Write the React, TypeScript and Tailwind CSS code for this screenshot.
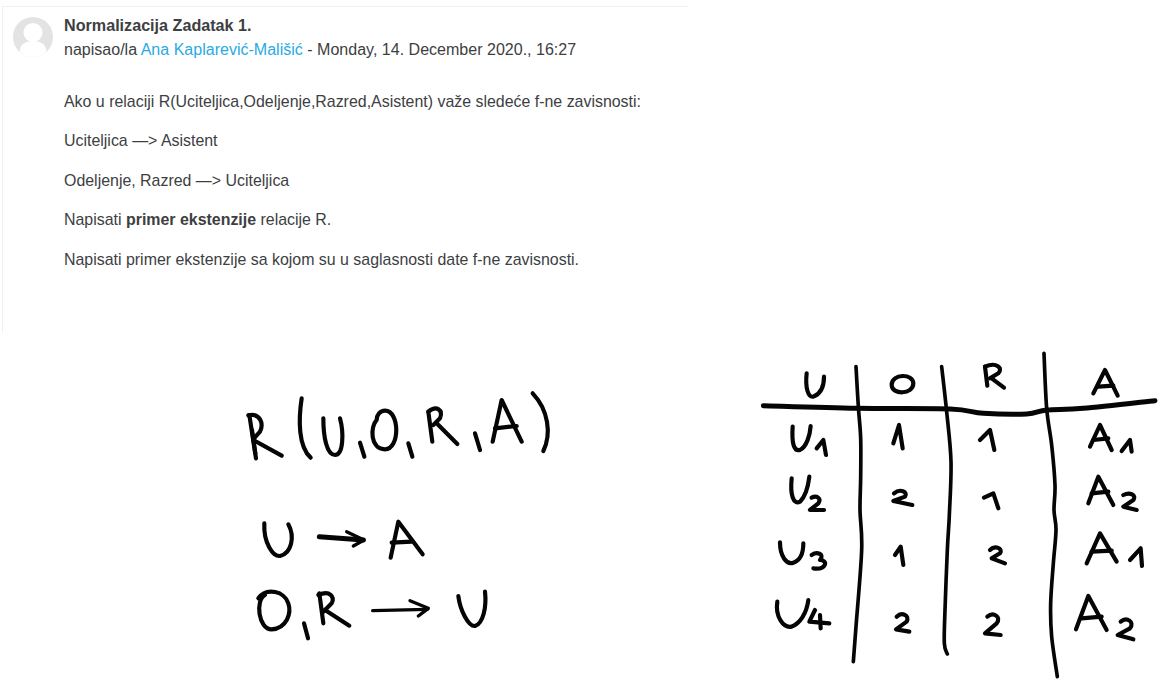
const INK = "#050505";

function Strokes({ d, w = 9 }: { d: string[]; w?: number }) {
  return (
    <g fill="none" stroke={INK} strokeWidth={w} strokeLinecap="round" strokeLinejoin="round">
      {d.map((p, i) => (
        <path key={i} d={p} />
      ))}
    </g>
  );
}

function smooth(pts: number[][]) {
  let d = `M${pts[0][0]} ${pts[0][1]}`;
  for (let i = 0; i < pts.length - 1; i++) {
    const p0 = pts[Math.max(i - 1, 0)];
    const p1 = pts[i];
    const p2 = pts[i + 1];
    const p3 = pts[Math.min(i + 2, pts.length - 1)];
    d += `C${p1[0] + (p2[0] - p0[0]) / 6} ${p1[1] + (p2[1] - p0[1]) / 6} ${p2[0] - (p3[0] - p1[0]) / 6} ${p2[1] - (p3[1] - p1[1]) / 6} ${p2[0]} ${p2[1]}`;
  }
  return d;
}

function Avatar() {
  return (
    <svg width="40" height="40" viewBox="0 0 40 40" className="shrink-0">
      <defs>
        <clipPath id="av">
          <circle cx="20" cy="20" r="20" />
        </clipPath>
      </defs>
      <circle cx="20" cy="20" r="20" fill="#e3e3e3" />
      <g clipPath="url(#av)" fill="#ffffff">
        <circle cx="20" cy="15.5" r="9.5" />
        <path d="M20 24c-7 0-12 3-13 8l-1 8h28l-1-8c-1-5-6-8-13-8z" />
      </g>
    </svg>
  );
}

const RELATION = [
  "M88 75L108 205",
  "M96 120L106 190",
  "M85 76C120 68 132 100 120 125L100 147",
  "M100 150L185 197",
  "M245 25C235 90 235 170 272 203",
  "M310 85C310 140 320 195 345 195C370 195 372 130 360 85",
  "M420 158L433 200",
  "M470 90C450 110 450 178 495 178C540 178 540 62 495 62C480 62 470 75 470 90",
  "M565 160L577 200",
  "M625 65L637 155",
  "M625 65C650 45 670 60 660 85L640 105",
  "M650 100L712 162",
  "M765 130L780 180",
  "M818 155L845 30L905 155",
  "M825 115L890 108",
  "M938 10C985 60 995 130 970 183",
  "M133 400C130 460 160 500 180 498C215 490 225 440 205 403",
  "M512 503L535 395L608 493",
  "M515 458L575 455",
  "M135 615C105 630 115 718 155 718C200 715 215 670 205 640C195 605 140 590 115 625",
  "M252 700L264 745",
  "M298 610L310 700",
  "M295 615C330 600 345 620 335 640L310 665",
  "M315 660L388 707",
  "M715 618C720 660 745 710 765 708C790 700 800 650 795 605",
];

const ARROWS = [
  "M380 425L432 450L400 468",
  "M570 632L625 655L595 678",
  "M458 662L622 658",
];

const TABLE = [
  smooth([[318, 65], [325, 185], [332, 280], [332, 400], [330, 495], [335, 615], [318, 845], [310, 950]]),
  smooth([[575, 65], [590, 200], [603, 350], [598, 510], [592, 615], [585, 795], [583, 895], [592, 927]]),
  smooth([[882, 25], [890, 190], [905, 300], [915, 420], [912, 495], [918, 555], [910, 655], [902, 775], [905, 875], [922, 995]]),
];

const RULE = smooth([[40, 182], [320, 190], [600, 192], [700, 205], [830, 207], [890, 195], [1000, 190], [1215, 167]]);

const CELLS = [
  "M170 85C165 130 175 158 190 155C215 145 222 120 222 95",
  "M425 120C425 150 490 150 490 115C490 85 425 85 425 120",
  "M705 65L712 122",
  "M705 65C740 50 760 70 745 85L720 100",
  "M725 100L762 128",
  "M1030 145L1065 75L1103 152",
  "M1045 125L1090 122",
  "M128 245C125 290 130 320 150 315C170 305 180 270 182 243",
  "M200 310L220 285L228 330",
  "M430 295L447 240L458 310",
  "M690 285L720 255L733 315",
  "M1020 305L1050 240L1085 315",
  "M1030 285L1075 280",
  "M1115 318L1140 285L1145 320",
  "M125 400C120 450 130 480 150 470C170 450 175 420 178 395",
  "M185 458C200 450 215 460 205 475L180 495L222 495",
  "M432 445C450 430 475 440 465 455L430 468L487 480",
  "M702 458L730 445L745 490",
  "M1015 475L1045 395L1090 480",
  "M1025 445L1075 440",
  "M1120 450C1140 440 1160 450 1150 465L1120 485L1160 495",
  "M90 592C90 635 110 660 130 653C155 645 160 620 160 595",
  "M185 630C200 620 225 625 210 645C235 645 230 675 190 670",
  "M435 630L452 605L460 660",
  "M720 615C735 600 760 610 750 625L725 640L765 655",
  "M1010 655L1050 565L1100 650",
  "M1025 620L1085 617",
  "M1140 645L1172 610L1176 663",
  "M82 770C75 815 100 850 125 845C150 835 170 805 175 765",
  "M195 795L178 830L238 835",
  "M210 810L212 850",
  "M440 815C455 800 480 810 470 830L438 853L478 860",
  "M712 815C730 800 755 815 740 835L705 865L752 870",
  "M978 853L1015 753L1070 855",
  "M995 820L1055 815",
  "M1112 830C1130 815 1155 830 1140 850L1103 870L1150 883",
];

export default function App() {
  return (
    <div className="w-[1174px] h-[691px] overflow-hidden bg-white font-['Liberation_Sans',Arial,sans-serif] text-[#3d4042]">
      <div className="h-[6px]" />
      <div className="ml-[2px] w-[686px] h-[327px] border-l border-t border-[#f1f1f1] flex pl-[10px] pt-[10px] gap-[11px]">
        <Avatar />
        <div className="leading-[20px]">
          <div className="text-[16.15px] font-bold mt-[-2px] h-[24px] leading-[20px]">Normalizacija Zadatak 1.</div>
          <div className="text-[16.05px] h-[20px]">
            napisao/la <span className="text-[#29abe2]">Ana Kaplarević-Mališić</span> - Monday, 14. December 2020., 16:27
          </div>
          <div className="text-[15.93px] mt-[33px] flex flex-col gap-[19.4px]">
            <p>Ako u relaciji R(Uciteljica,Odeljenje,Razred,Asistent) važe sledeće f-ne zavisnosti:</p>
            <p>Uciteljica —&gt; Asistent</p>
            <p>Odeljenje, Razred —&gt; Uciteljica</p>
            <p>
              Napisati <strong className="font-bold">primer ekstenzije</strong> relacije R.
            </p>
            <p>Napisati primer ekstenzije sa kojom su u saglasnosti date f-ne zavisnosti.</p>
          </div>
        </div>
      </div>
      <div className="flex items-start pl-[220px] pt-[12px]">
        <svg width="350" height="260" viewBox="0 0 1050 780" className="mt-[45px] shrink-0" role="img" aria-label="Ručno pisano: R(U,O,R,A), U → A, O,R → U">
          <Strokes d={RELATION} w={12.5} />
          <Strokes d={ARROWS} w={10} />
          <Strokes d={["M298 440L430 450"]} w={15} />
        </svg>
        <svg width="410" height="340" viewBox="0 0 1230 1020" className="ml-[180px] shrink-0" role="img" aria-label="Ručno pisana tabela U, O, R, A">
          <Strokes d={TABLE} w={11} />
          <Strokes d={[RULE]} w={15} />
          <Strokes d={CELLS} w={12.5} />
        </svg>
      </div>
    </div>
  );
}
